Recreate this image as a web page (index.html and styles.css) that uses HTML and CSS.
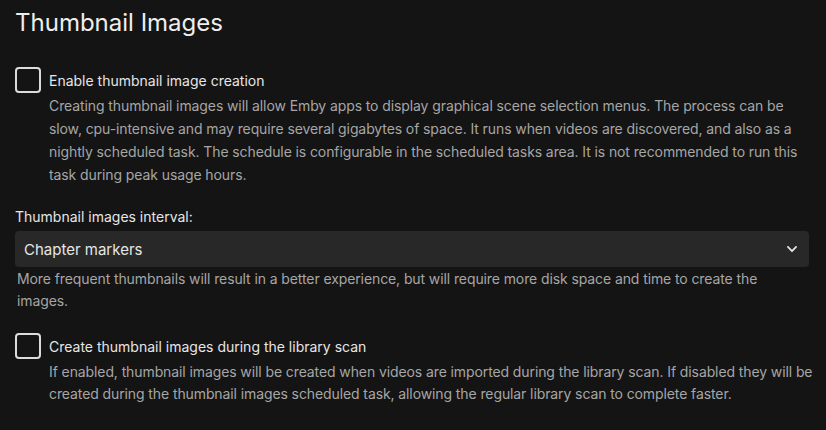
FILE: index.html
```html
<!DOCTYPE html>
<html lang="en">
<head>
    <meta charset="UTF-8">
    <title>Thumbnail Images</title>
    <link rel="stylesheet" href="styles.css">
</head>
<body>
    <h2 class="section-title">Thumbnail Images</h2>

    <div class="check-field">
        <label class="check-row">
            <span class="check-box"></span>
            <span class="check-label">Enable thumbnail image creation</span>
        </label>
        <div class="field-desc">Creating thumbnail images will allow Emby apps to display graphical scene selection menus. The process can be slow, cpu-intensive and may require several gigabytes of space. It runs when videos are discovered, and also as a nightly scheduled task. The schedule is configurable in the scheduled tasks area. It is not recommended to run this task during peak usage hours.</div>
    </div>

    <div class="select-field">
        <label class="select-label" for="interval">Thumbnail images interval:</label>
        <div class="select-box">
            <span>Chapter markers</span>
            <svg class="chevron" width="14" height="14" viewBox="0 0 24 24"><path d="M5 8.5l7 7 7-7" fill="none" stroke="#e6e6e6" stroke-width="3" stroke-linecap="round" stroke-linejoin="round"/></svg>
        </div>
        <div class="select-desc">More frequent thumbnails will result in a better experience, but will require more disk space and time to create the images.</div>
    </div>

    <div class="check-field check-field-last">
        <label class="check-row">
            <span class="check-box"></span>
            <span class="check-label">Create thumbnail images during the library scan</span>
        </label>
        <div class="field-desc">If enabled, thumbnail images will be created when videos are imported during the library scan. If disabled they will be created during the thumbnail images scheduled task, allowing the regular library scan to complete faster.</div>
    </div>
</body>
</html>
```

FILE: styles.css
```css
body {
    margin: 0;
    padding: 0 17px 0 15px;
    background-color: #141414;
    color: #e6e6e6;
    font-family: Inter, Roboto, sans-serif;
    font-size: 14px;
}
.section-title {
    margin: 0;
    padding-top: 7px;
    font-size: 24px;
    font-weight: 400;
    line-height: 32px;
    color: #eeeeee;
}
.check-field {
    margin-top: 28px;
}
.check-field-last {
    margin-top: 21px;
}
.check-row {
    display: flex;
    align-items: center;
    gap: 8px;
}
.check-box {
    width: 22px;
    height: 22px;
    border: 2px solid #dcdcdc;
    border-radius: 4px;
    flex-shrink: 0;
}
.check-label {
    font-size: 14px;
    color: #e6e6e6;
}
.field-desc {
    margin-left: 34px;
    margin-top: 1px;
    color: #a6a6a6;
    line-height: 23px;
    letter-spacing: -0.1px;
}
.check-field-last .field-desc {
    line-height: 22px;
    margin-top: 2px;
    margin-right: -6px;
}
.select-field {
    margin-top: 21px;
}
.select-label {
    display: block;
    color: #e6e6e6;
    line-height: 20px;
}
.select-box {
    margin-top: 4px;
    height: 36px;
    background-color: #282828;
    border-radius: 4px;
    display: flex;
    align-items: center;
    justify-content: space-between;
    padding: 0 10px 0 9px;
    font-size: 15px;
    color: #e6e6e6;
}
.select-desc {
    margin-top: 1px;
    padding-left: 2px;
    color: #a6a6a6;
    line-height: 22px;
    letter-spacing: -0.1px;
}
```
